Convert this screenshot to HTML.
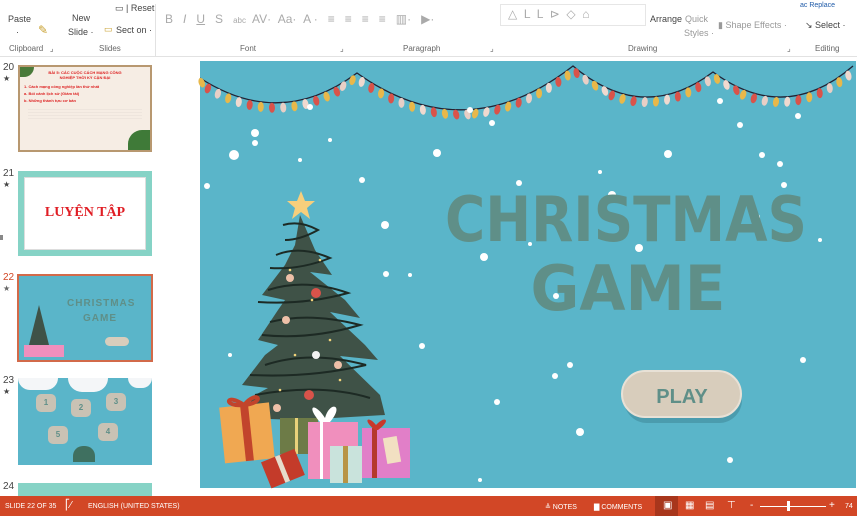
<!DOCTYPE html>
<html><head><meta charset="utf-8">
<style>
*{margin:0;padding:0;box-sizing:border-box}
body{width:857px;height:516px;overflow:hidden;background:#fff;font-family:"Liberation Sans",sans-serif;position:relative}
.r{position:absolute;font-size:9px;color:#444;white-space:nowrap}
.g{position:absolute;top:44px;font-size:8px;color:#666}
.sb{position:absolute;left:0;top:496px;width:857px;height:20px;background:#d24726;color:#fff;font-size:7px}
.sb span{position:absolute;top:7px}
.th{position:absolute;left:18px;width:134px;overflow:hidden}
.num{position:absolute;left:3px;font-size:10px;color:#444}
</style></head><body>
<div class="r" style="left:8px;top:14px">Paste</div>
<div class="r" style="left:16px;top:27px">·</div>
<div class="r" style="left:38px;top:23px;color:#c8a030;font-size:12px">✎</div>
<div class="r" style="left:72px;top:13px">New</div>
<div class="r" style="left:68px;top:27px">Slide ·</div>
<div class="r" style="left:115px;top:3px">▭ | Reset</div>
<div class="r" style="left:104px;top:24px;color:#c8a030">▭</div>
<div class="r" style="left:116px;top:25px">Sect on ·</div>
<div style="position:absolute;left:155px;top:4px;width:1px;height:52px;background:#e2e2e2"></div>
<div class="r" style="left:165px;top:12px;font-size:12px;color:#aaa;letter-spacing:0">B &nbsp;&nbsp;<i>I</i> &nbsp;&nbsp;<u>U</u> &nbsp;&nbsp;S&nbsp;&nbsp; <span style="font-size:8px">abc</span>&nbsp; AV· &nbsp;Aa· &nbsp;A · &nbsp;&nbsp;≡ &nbsp;&nbsp;≡ &nbsp;&nbsp;≡ &nbsp;&nbsp;≡ &nbsp;&nbsp;▥· &nbsp;&nbsp;▶·</div>
<div style="position:absolute;left:500px;top:4px;width:146px;height:22px;border:1px solid #e6e6e6"></div>
<div class="r" style="left:508px;top:7px;font-size:12px;color:#aaa">△ &nbsp;L &nbsp;L &nbsp;⊳ &nbsp;◇ &nbsp;⌂</div>
<div class="r" style="left:650px;top:14px">Arrange</div>
<div class="r" style="left:685px;top:14px;color:#999">Quick</div>
<div class="r" style="left:684px;top:28px;color:#999">Styles ·</div>
<div class="r" style="left:718px;top:20px;color:#999">▮ Shape Effects ·</div>
<div class="r" style="left:800px;top:2px;color:#1e5aa8;font-size:7px">ac Replace</div>
<div class="r" style="left:805px;top:20px">↘ Select ·</div>
<div class="g" style="left:9px">Clipboard &nbsp;&nbsp;⌟</div>
<div class="g" style="left:99px">Slides</div>
<div class="g" style="left:240px">Font</div>
<div class="g" style="left:340px">⌟</div>
<div class="g" style="left:403px">Paragraph</div>
<div class="g" style="left:490px">⌟</div>
<div class="g" style="left:628px">Drawing</div>
<div class="g" style="left:787px">⌟</div>
<div class="g" style="left:815px">Editing</div>
<div style="position:absolute;left:0;top:56px;width:857px;height:1px;background:#e2e2e2"></div>
<div class="num" style="top:62px">20<br><span style="font-size:8px">★</span></div>
<div class="th" style="top:65px;height:87px;background:#f6ede4;border:2px solid #b89870">
 <div style="text-align:center;font-size:4px;color:#d22;margin-top:3px;font-weight:bold">BÀI 5: CÁC CUỘC CÁCH MẠNG CÔNG<br>NGHIỆP THỜI KỲ CẬN ĐẠI</div>
 <div style="font-size:4px;color:#d22;margin:3px 4px;line-height:7px;font-weight:bold">1. Cách mạng công nghiệp lần thứ nhất<br>a. Bối cảnh lịch sử (Giảm tải)<br>b. Những thành tựu cơ bản</div>
 <div style="height:14px;margin:0 8px;background:repeating-linear-gradient(#fff0 0 2px,#7771 2px 3px)"></div>
 <div style="position:absolute;left:0;top:0;width:14px;height:10px;background:#4a7a3a;border-radius:0 0 10px 0"></div>
 <div style="position:absolute;right:0;bottom:0;width:22px;height:20px;background:#3f7a38;border-radius:14px 0 0 0"></div>
</div>
<div class="num" style="top:168px">21<br><span style="font-size:8px">★</span></div>
<div class="th" style="top:171px;height:85px;background:#86d3c6;padding:6px 6px">
 <div style="background:#fff;height:73px;border:1px solid #ddd;text-align:center;padding-top:27px;font-family:'Liberation Serif',serif;font-weight:bold;color:#e01e25;font-size:14px">LUYỆN TẬP</div>
</div>
<div style="position:absolute;left:0;top:235px;width:3px;height:5px;background:#888"></div>
<div class="num" style="top:272px;color:#d24726">22<br><span style="font-size:8px;color:#666">★</span></div>
<div class="th" style="top:274px;left:17px;width:136px;height:88px;background:#5ab5c9;border:2px solid #d26a4a">
 <div style="position:absolute;left:48px;top:22px;font-size:10px;font-weight:bold;color:#5f8f88;letter-spacing:1px">CHRISTMAS</div>
 <div style="position:absolute;left:64px;top:37px;font-size:10px;font-weight:bold;color:#5f8f88;letter-spacing:1px">GAME</div>
 <div style="position:absolute;left:86px;top:61px;width:24px;height:9px;border-radius:5px;background:#d8cdbc"></div>
 <div style="position:absolute;left:10px;top:29px;width:0;height:0;border-left:10px solid transparent;border-right:10px solid transparent;border-bottom:40px solid #3f5247"></div>
 <div style="position:absolute;left:5px;top:69px;width:40px;height:12px;background:#f08fbd"></div>
</div>
<div class="num" style="top:375px">23<br><span style="font-size:8px">★</span></div>
<div class="th" style="top:378px;height:87px;background:#5ab5c9;font-weight:bold;color:#5f8f88;font-size:8px">
 <div style="position:absolute;left:0;top:0;width:40px;height:12px;background:#f4f6f8;border-radius:0 0 20px 20px"></div>
 <div style="position:absolute;left:50px;top:0;width:40px;height:14px;background:#f4f6f8;border-radius:0 0 20px 20px"></div>
 <div style="position:absolute;left:110px;top:0;width:24px;height:10px;background:#f4f6f8;border-radius:0 0 10px 10px"></div>
 <div style="position:absolute;left:18px;top:16px;width:20px;height:18px;background:#c9c2b4;border-radius:5px;text-align:center;line-height:18px">1</div>
 <div style="position:absolute;left:53px;top:21px;width:20px;height:18px;background:#c9c2b4;border-radius:5px;text-align:center;line-height:18px">2</div>
 <div style="position:absolute;left:88px;top:15px;width:20px;height:18px;background:#c9c2b4;border-radius:5px;text-align:center;line-height:18px">3</div>
 <div style="position:absolute;left:30px;top:48px;width:20px;height:18px;background:#c9c2b4;border-radius:5px;text-align:center;line-height:18px">5</div>
 <div style="position:absolute;left:80px;top:45px;width:20px;height:18px;background:#c9c2b4;border-radius:5px;text-align:center;line-height:18px">4</div>
 <div style="position:absolute;left:55px;top:68px;width:22px;height:16px;background:#3f7060;border-radius:10px 10px 0 0"></div>
</div>
<div class="num" style="top:481px">24</div>
<div class="th" style="top:483px;height:13px;background:#86d3c6"></div>
<svg style="position:absolute;left:0;top:0" width="857" height="516" viewBox="0 0 857 516">
 <rect x="200" y="61" width="656" height="427" fill="#5ab5c9"/>
 <g id="gar" fill="none" stroke="#223" stroke-width="1.3">
  <path d="M200 78 Q280 130 357 73 Q465 150 573 66 Q643 125 713 72 Q785 125 853 66"/>
 </g>
 <g id="bulbs"></g>
 <g id="snow" fill="#fff"></g>
 <text x="626" y="241" text-anchor="middle" font-family="DejaVu Sans" font-weight="bold" font-size="62" fill="#5f8f88" textLength="362" lengthAdjust="spacingAndGlyphs">CHRISTMAS</text>
 <text x="628" y="310" text-anchor="middle" font-family="DejaVu Sans" font-weight="bold" font-size="62" fill="#5f8f88" textLength="195" lengthAdjust="spacingAndGlyphs">GAME</text>
 <rect x="624" y="377" width="118" height="46" rx="23" fill="#3a7f8f" opacity=".45"/>
 <rect x="622" y="371" width="119" height="46" rx="23" fill="#d8cdbc" stroke="#e8e1d6" stroke-width="2"/>
 <text x="682" y="403" text-anchor="middle" font-family="Liberation Sans" font-weight="bold" font-size="20" fill="#5f8f88">PLAY</text>
 <polygon fill="#3f5247" points="300,215 315,250 332,275 310,272 345,300 360,318 330,312 365,345 378,360 340,356 380,395 385,415 300,420 240,418 255,395 268,388 242,385 265,355 278,345 258,340 278,310 285,300 262,295 285,265 295,245" />
 <g fill="none" stroke="#1d2a24" stroke-width="2">
  <path d="M283 225 Q300 220 318 230 Q300 240 285 240"/>
  <path d="M276 255 Q300 245 330 258 Q300 270 270 268"/>
  <path d="M268 290 Q305 278 348 293 Q305 305 258 302"/>
  <path d="M270 322 Q310 312 360 325 Q310 340 262 335"/>
  <path d="M265 365 Q310 350 366 365 Q310 378 250 375"/>
  <path d="M255 395 Q320 383 370 398"/>
 </g>
 <g fill="#f2d37a"><circle cx="290" cy="270" r="1.3"/><circle cx="312" cy="300" r="1.3"/><circle cx="330" cy="340" r="1.3"/><circle cx="295" cy="355" r="1.3"/><circle cx="340" cy="380" r="1.3"/><circle cx="280" cy="390" r="1.3"/><circle cx="320" cy="260" r="1.3"/></g>
 <circle cx="316" cy="293" r="5" fill="#d9534a"/><circle cx="286" cy="320" r="4" fill="#eec0a8"/><circle cx="316" cy="355" r="4" fill="#f2f2f2"/><circle cx="309" cy="395" r="5" fill="#d9534a"/><circle cx="338" cy="365" r="4" fill="#eec0a8"/><circle cx="277" cy="408" r="4" fill="#eec0a8"/><circle cx="290" cy="278" r="4" fill="#eec0a8"/>
 <polygon fill="#f7cf7c" points="301,191 305,201 315,201 307,208 310,219 301,212 292,219 295,208 287,201 297,201"/>
 <g transform="rotate(-6 246 433)"><rect x="222" y="405" width="50" height="56" fill="#f0a852"/><rect x="243" y="405" width="8" height="56" fill="#c2442c"/><path d="M247 405 C230 390 225 405 247 405 C262 390 270 405 247 405" fill="none" stroke="#c2442c" stroke-width="4"/></g>
 <rect x="280" y="418" width="38" height="36" fill="#6d7b47"/><rect x="295" y="418" width="3" height="36" fill="#e9d27a"/>
 <rect x="308" y="422" width="50" height="57" fill="#f08fbd"/><rect x="320" y="422" width="3" height="57" fill="#fff"/><path d="M320 422 C305 405 315 402 325 418 C330 400 345 405 330 422Z" fill="#fff"/>
 <rect x="330" y="446" width="32" height="37" fill="#c9e3dc"/><rect x="343" y="446" width="5" height="37" fill="#b89445"/>
 <rect x="362" y="428" width="48" height="50" fill="#e17fc8"/><rect x="372" y="428" width="5" height="50" fill="#b5392b"/><path d="M375 430 C362 420 368 415 376 425 C385 415 392 420 378 430Z" fill="#c9382a"/><rect x="385" y="437" width="14" height="26" fill="#f2e0c2" transform="rotate(-10 392 450)"/>
 <g transform="rotate(-22 282 469)"><rect x="265" y="455" width="36" height="28" fill="#c43b2a"/><rect x="280" y="455" width="5" height="28" fill="#e6dccb"/></g>
</svg>
<div class="sb">
 <span style="left:5px">SLIDE 22 OF 35</span>
 <span style="left:65px;top:4px;font-size:10px">⎡⁄</span>
 <span style="left:88px">ENGLISH (UNITED STATES)</span>
 <span style="left:545px">≜ NOTES</span>
 <span style="left:594px">▇ COMMENTS</span>
 <div style="position:absolute;left:655px;top:0;width:23px;height:20px;background:#a8361c"></div>
 <span style="left:663px;top:4px;font-size:10px">▣</span>
 <span style="left:685px;top:4px;font-size:10px">▦</span>
 <span style="left:705px;top:4px;font-size:10px">▤</span>
 <span style="left:727px;top:4px;font-size:10px">⊤</span>
 <span style="left:750px;top:4px;font-size:10px">-</span>
 <div style="position:absolute;left:760px;top:10px;width:66px;height:1px;background:#fff"></div>
 <div style="position:absolute;left:787px;top:5px;width:3px;height:10px;background:#fff"></div>
 <span style="left:829px;top:4px;font-size:10px">+</span>
 <span style="left:845px">74</span>
</div>
<script>
(function(){
var ns="http://www.w3.org/2000/svg",b=document.getElementById('bulbs'),s=document.getElementById('snow');
var p=document.querySelector('#gar path'),L=p.getTotalLength(),cols=['#e8b84a','#d9534a','#e8cfc6','#e8b84a','#f0d9cf','#d9534a'];
for(var i=0;i<L;i+=11){var pt=p.getPointAtLength(i);var e=document.createElementNS(ns,'ellipse');e.setAttribute('cx',pt.x);e.setAttribute('cy',pt.y+5);e.setAttribute('rx',3);e.setAttribute('ry',5);e.setAttribute('fill',cols[(i/11|0)%6]);e.setAttribute('transform','rotate('+((i*7)%40-20)+' '+pt.x+' '+pt.y+')');b.appendChild(e);}
var sn=[[255,133,4],[234,155,5],[207,186,3],[255,143,3],[310,107,3],[362,180,3],[385,225,4],[386,274,3],[437,153,4],[492,123,3],[519,183,3],[612,195,4],[639,248,4],[668,154,4],[720,101,3],[762,155,3],[780,164,3],[798,116,3],[784,185,3],[820,240,2],[803,360,3],[730,460,3],[580,432,4],[556,296,3],[454,224,3],[484,257,4],[555,376,3],[570,365,3],[497,402,3],[740,125,3],[757,217,3],[600,172,2],[230,355,2],[422,346,3],[530,244,2],[681,386,3],[650,503,2],[480,480,2],[300,160,2],[470,110,3],[330,140,2],[410,275,2]];
sn.forEach(function(c){var e=document.createElementNS(ns,'circle');e.setAttribute('cx',c[0]);e.setAttribute('cy',c[1]);e.setAttribute('r',c[2]);s.appendChild(e);});
})();
</script>
</body></html>
